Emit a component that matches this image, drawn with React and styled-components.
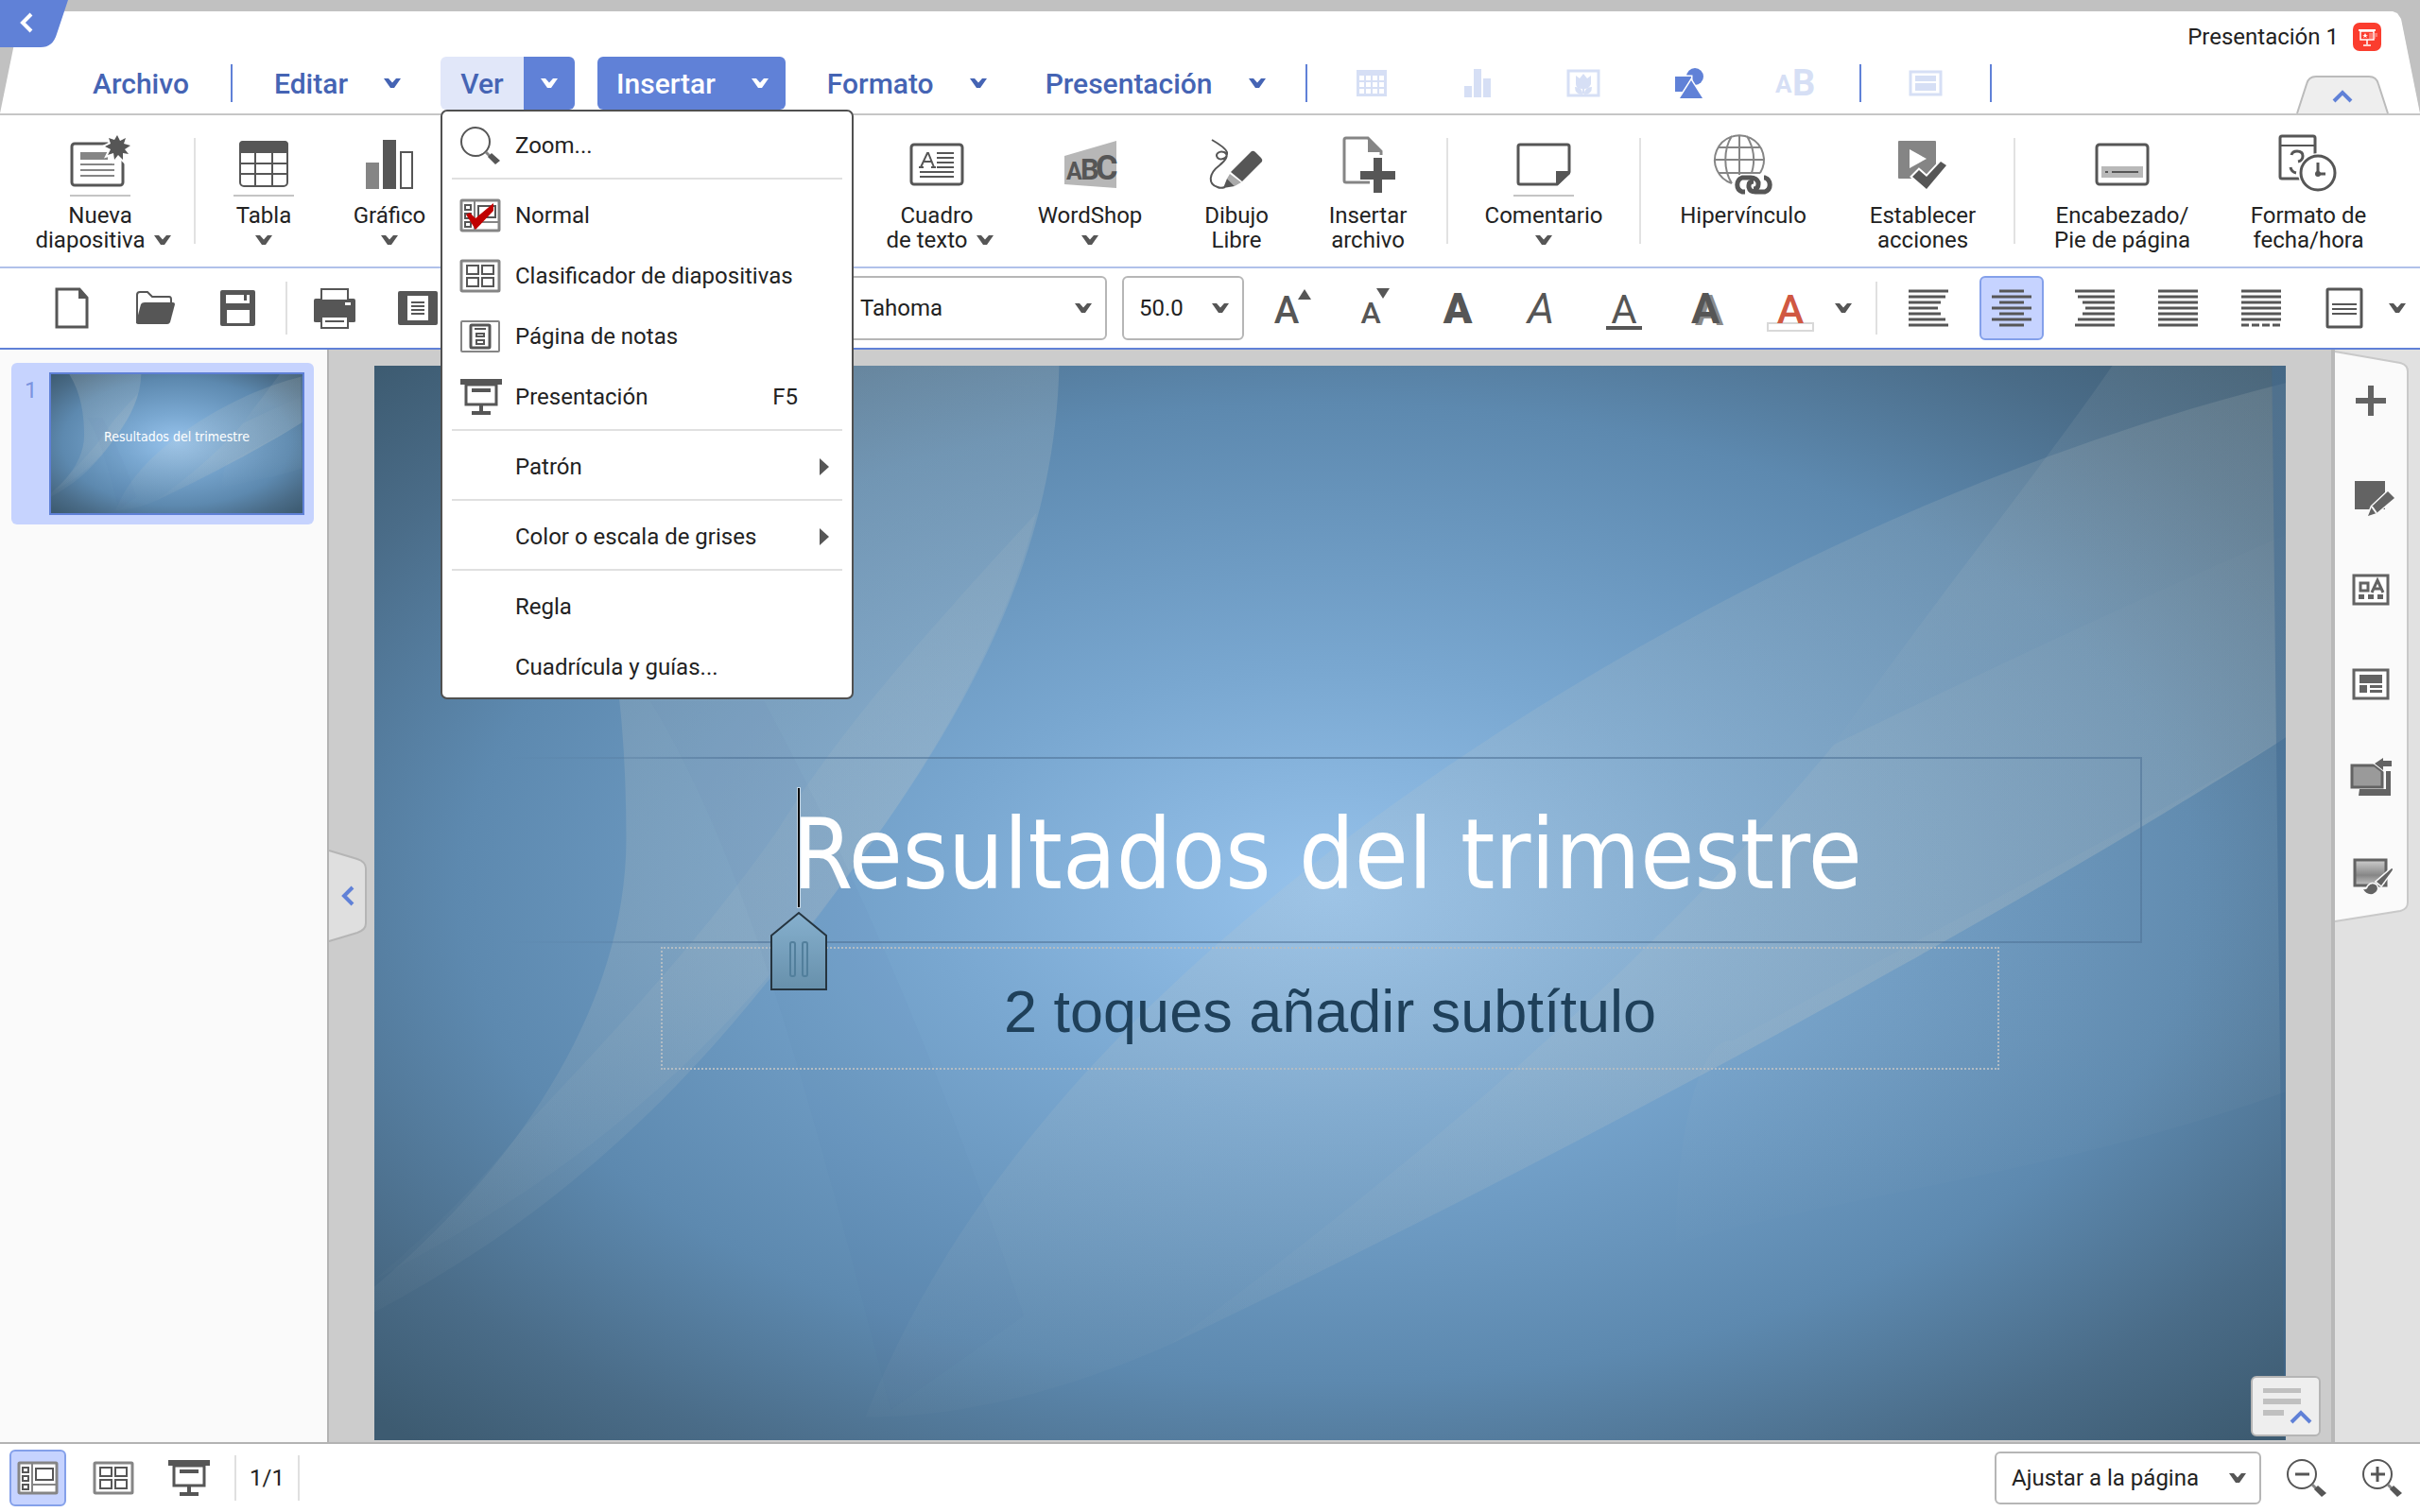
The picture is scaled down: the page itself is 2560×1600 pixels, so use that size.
import React, { useState } from 'react';
import styled, { createGlobalStyle, css } from 'styled-components';

const INK = '#565656';
const MID = '#858585';
const BLUE = '#6081d7';
const PALE = '#d6dff5';

// Global styles
const GlobalStyle = createGlobalStyle`
  * {
    box-sizing: border-box;
  }

  body {
    margin: 0;
    background: #ffffff;
    color: #222222;
    font-family: Roboto, 'Noto Sans', sans-serif;
    font-size: 24px;
  }

  button,
  select {
    margin: 0;
    padding: 0;
    border: 0;
    background: none;
    color: inherit;
    font: inherit;
    cursor: pointer;
  }
`;

const AppContainer = styled.div`
  display: flex;
  flex-direction: column;
  height: 100vh;
  overflow: hidden;
`;

const Svg = styled.svg`
  display: block;
  flex: none;
  overflow: visible;
`;

const Icon = ({ w = 48, h = w, children, ...rest }) => (
  <Svg width={w} height={h} viewBox={`0 0 ${w} ${h}`} fill={INK} aria-hidden="true" {...rest}>
    {children}
  </Svg>
);

const Chevron = ({ color = INK }) => (
  <Icon w={18} h={10} fill={color}>
    <path d="M0 0h5l4 4.500 4-4.500h5l-7 10h-4z" />
  </Icon>
);

// Header
const Header = styled.header`
  position: relative;
  z-index: 2;
  flex: none;
  height: 122px;
  background: #c1c1c1;
  border-bottom: 2px solid #c6c6c6;
`;

const HeaderSheet = styled.div`
  position: absolute;
  inset: 12px 0 0;
  background: #ffffff;
  clip-path: polygon(
    22px 0,
    calc(100% - 29px) 0,
    calc(100% - 24px) 2px,
    calc(100% - 20px) 8px,
    calc(100% - 18px) 18px,
    100% 100%,
    0 100%
  );
`;

const BackButton = styled.button`
  position: absolute;
  top: 0;
  left: 0;
`;

const TitleRow = styled.div`
  position: relative;
  display: flex;
  align-items: center;
  justify-content: flex-end;
  gap: 15px;
  height: 60px;
  padding: 17px 41px 0 0;
`;

const MenuBar = styled.nav`
  position: relative;
  display: flex;
  align-items: center;
  gap: 24px;
  height: 56px;
  padding-left: 78px;
`;

const MenuGroup = styled.div`
  position: relative;
  display: flex;
  min-width: 142px;
  height: 56px;
  border-radius: 6px;
  color: ${(p) => (p.$filled ? '#ffffff' : '#4564b4')};
  background: ${(p) => (p.$filled ? BLUE : 'transparent')};
`;

const MenuLabel = styled.button`
  flex: 1;
  padding: 0 20px;
  font-size: 30px;
  font-weight: 500;
  border-radius: 6px 0 0 6px;
  white-space: nowrap;
  background: ${(p) => (p.$open ? '#e1e7f9' : 'transparent')};
`;

const MenuArrow = styled.button`
  display: grid;
  place-items: center;
  width: 54px;
  border-radius: 0 6px 6px 0;
  background: ${(p) => (p.$open ? BLUE : 'transparent')};
`;

const MenuRule = styled.span`
  width: 2px;
  height: 40px;
  background: ${BLUE};
`;

const QuickButton = styled.button`
  display: grid;
  place-items: center;
  width: 88px;
  height: 56px;
`;

const CollapseButton = styled.button`
  position: absolute;
  right: 33px;
  bottom: 0;
`;

// Drop-down menu below "Ver"
const Dropdown = styled.div`
  position: absolute;
  top: 56px;
  left: 0;
  z-index: 5;
  width: 437px;
  padding: 4px 0 0;
  border: 2px solid #505050;
  border-radius: 7px;
  background: #ffffff;
  color: #222222;
`;

const MenuRow = styled.button`
  display: grid;
  grid-template-columns: 42px 1fr auto 10px;
  align-items: center;
  column-gap: 16px;
  width: 100%;
  height: 64px;
  padding: 0 24px 0 19px;
  text-align: left;
  white-space: nowrap;
`;

const Shortcut = styled.span`
  padding-right: 7px;
`;

const MenuDivider = styled.hr`
  height: 2px;
  margin: 2px 10px 6px;
  border: 0;
  background: #e0e0e0;
`;

// Ribbon
const Ribbon = styled.div`
  display: flex;
  flex: none;
  height: 162px;
  padding: 20px 27px 0 14px;
  border-bottom: 2px solid #b0c1ea;
`;

const RibbonItem = styled.button`
  display: flex;
  flex-direction: column;
  align-items: center;
  flex: none;
  width: ${(p) => p.$width}px;
  height: 130px;
  line-height: 26px;
  white-space: nowrap;
`;

const RibbonIcon = styled.span`
  height: 66px;
  margin-bottom: 7px;
  border-bottom: 2px solid ${(p) => (p.$split ? '#c4c4c4' : 'transparent')};
`;

const RibbonLine = styled.span`
  display: flex;
  align-items: center;
  gap: 9px;
  min-height: 26px;
  padding-left: ${(p) => (p.$withArrow ? 6 : 0)}px;
`;

const RibbonRule = styled.span`
  flex: none;
  width: 2px;
  height: 112px;
  margin: 4px 7px 0;
  background: #e2e2e2;
`;

const Spacer = styled.span`
  flex: 1;
`;

// Format toolbar
const Toolbar = styled.div`
  display: flex;
  align-items: center;
  justify-content: space-between;
  flex: none;
  height: 86px;
  padding: 0 10px 0 42px;
  border-bottom: 2px solid ${BLUE};
`;

const ToolGroup = styled.div`
  display: flex;
  align-items: center;
  gap: ${(p) => p.$gap}px;
`;

const ToolButton = styled.button`
  display: grid;
  place-items: center;
  width: 68px;
  height: 68px;
  border: 2px solid transparent;
  border-radius: 6px;
  ${(p) =>
    p.$active &&
    css`
      border-color: #84a0ea;
      background: #c6d3ff;
    `}
`;

const ArrowButton = styled.button`
  display: grid;
  place-items: center;
  width: 28px;
  height: 68px;
`;

const ToolRule = styled.span`
  width: 2px;
  height: 56px;
  background: #e0e0e0;
`;

const SelectBox = styled.div`
  display: grid;
  align-items: center;
  width: ${(p) => p.$width}px;
  height: ${(p) => p.$height || 68}px;
  border: 2px solid #b6b6b6;
  border-radius: 6px;
  background: #ffffff;

  select,
  svg {
    grid-area: 1 / 1;
  }

  select {
    width: 100%;
    height: 100%;
    padding-left: 16px;
    appearance: none;
    outline: none;
  }

  svg {
    justify-self: end;
    margin-right: 14px;
    pointer-events: none;
  }
`;

// Work area
const Workspace = styled.main`
  display: flex;
  flex: 1;
  min-height: 0;
`;

const SlideList = styled.aside`
  flex: none;
  width: 348px;
  padding: 14px 14px 0 12px;
  border-right: 2px solid #b3b3b3;
  background: #fafafa;
`;

const SlideItem = styled.button`
  display: flex;
  align-items: flex-start;
  width: 320px;
  padding: 10px 10px 10px 14px;
  border-radius: 6px;
  background: #c6d3fe;
`;

const SlideNumber = styled.span`
  width: 26px;
  padding-top: 5px;
  color: #7b94e0;
  text-align: left;
`;

const Thumb = styled.span`
  display: grid;
  width: 270px;
  height: 151px;
  border: 2px solid #5f80d6;

  > * {
    grid-area: 1 / 1;
  }
`;

const ThumbTitle = styled.span`
  position: relative;
  align-self: start;
  justify-self: center;
  padding-top: 57px;
  color: #ffffff;
  font: 14px/18px 'DejaVu Sans Condensed', 'DejaVu Sans', sans-serif;
`;

const Canvas = styled.section`
  position: relative;
  flex: 1;
  padding: 17px 48px 2px;
  background: #cccccc;
`;

const Slide = styled.div`
  position: relative;
  width: 100%;
  height: 100%;
`;

const Backdrop = styled.svg`
  display: block;
  width: 100%;
  height: 100%;
`;

const TitleBox = styled.h1`
  position: absolute;
  top: 36.4%;
  left: 7%;
  right: 7.5%;
  height: 17.3%;
  display: flex;
  align-items: center;
  justify-content: center;
  margin: 0;
  padding: 10px 0 0 6px;
  border: solid #5f86ad;
  border-width: 2px 2px 2px 0;
  border-image: linear-gradient(90deg, transparent, rgba(80, 116, 152, 0.6) 14%) 2;
  color: #ffffff;
  font: 103px/120px 'DejaVu Sans Condensed', 'DejaVu Sans', sans-serif;
  white-space: nowrap;
`;

const SubtitleBox = styled.p`
  position: absolute;
  top: 54.1%;
  left: 15%;
  right: 15%;
  height: 11.4%;
  display: flex;
  align-items: center;
  justify-content: center;
  margin: 0;
  padding-top: 6px;
  border: 2px dotted #b2bcc4;
  color: #1f405a;
  font: 63px/72px 'Liberation Sans', Arial, sans-serif;
  white-space: nowrap;
`;

const Caret = styled.span`
  position: absolute;
  top: 39.2%;
  left: 22.1%;
  width: 4px;
  height: 128px;
  border: 1px solid #c5d6e4;
  background: #000000;
`;

const CaretHandle = styled.span`
  position: absolute;
  top: 50.8%;
  left: 20.7%;
`;

const PanelHandle = styled.button`
  position: absolute;
  top: calc(50% - 49px);
  left: 0;
`;

const NotesButton = styled.button`
  position: absolute;
  right: 11px;
  bottom: 6px;
  width: 74px;
  height: 64px;
  padding: 0 0 0 11px;
  border: 2px solid #b5b5b5;
  border-radius: 6px;
  background: #eeeeee;
`;

const SidePanel = styled.aside`
  flex: none;
  width: 94px;
  border-left: 4px solid #b8b8b8;
  background: #e1e1e1;
`;

const SideTab = styled.div`
  display: grid;
  width: 78px;
  height: 606px;

  > * {
    grid-area: 1 / 1;
  }
`;

const SideButtons = styled.div`
  position: relative;
  display: flex;
  flex-direction: column;
  padding-top: 4px;
`;

const SideButton = styled.button`
  display: grid;
  place-items: center;
  width: 76px;
  height: 100px;
`;

// Status bar
const StatusBar = styled.footer`
  display: flex;
  align-items: center;
  flex: none;
  height: 74px;
  padding: 0 12px 0 10px;
  border-top: 2px solid #b3b3b3;
`;

const ViewButton = styled(ToolButton)`
  width: 60px;
  height: 60px;
  margin-right: 20px;
`;

const PageCount = styled.span`
  padding: 8px 14px;
  border: solid #e0e0e0;
  border-width: 0 2px;
  line-height: 32px;
  margin-left: -2px;
`;

const ZoomButtons = styled.div`
  display: flex;
  gap: 24px;
  margin-left: 20px;
`;

const ZoomButton = styled.button`
  display: grid;
  place-items: center;
  width: 56px;
  height: 60px;
`;

/* ---------- icons ---------- */

const NewSlideIcon = () => (
  <Icon w={64}>
    <rect x="2" y="10" width="54" height="44" rx="3" fill="none" stroke={INK} strokeWidth="3" />
    <path d="M11 19h29v8H11z" fill={MID} />
    <path d="M11 32h36M11 38h36M11 44h36" stroke={MID} strokeWidth="2" />
    <path
      d="M50 1l3 6 6-3-2 6 7 2-6 4 4 5-6-1 0 7-5-5-4 5-1-7-6 2 3-6-6-3 6-3-2-6 6 2z"
      stroke="#fff"
      strokeWidth="4"
      paintOrder="stroke"
    />
  </Icon>
);

const TableIcon = () => (
  <Icon w={64}>
    <path d="M6 20v-9a4 4 0 0 1 4-4h44a4 4 0 0 1 4 4v9z" />
    <rect x="7" y="8" width="50" height="47" rx="4" fill="none" stroke={INK} strokeWidth="2" />
    <path d="M7 31h50M7 42h50M23 20v35M41 20v35" stroke={INK} strokeWidth="2" />
  </Icon>
);

const ChartIcon = () => (
  <Icon w={64}>
    <path d="M7 30h14v28H7z" fill={MID} />
    <path d="M25 6h14v52H25z" />
    <path d="M44 19h12v38H44z" fill="none" stroke={INK} strokeWidth="2" />
  </Icon>
);

const TextBoxIcon = () => (
  <Icon w={64}>
    <rect x="5" y="11" width="54" height="42" rx="3" fill="none" stroke={INK} strokeWidth="3" />
    <path d="M15 35l7-15h1l6 15M18 29h9M13 35h5M26 35h5" fill="none" stroke={INK} strokeWidth="2" />
    <path d="M32 20h18M32 25h18M32 30h18M32 35h18M14 40h36M14 45h36" stroke={INK} strokeWidth="2" />
  </Icon>
);

const WordShopIcon = () => (
  <Icon w={64} fontFamily="'Liberation Sans Narrow', Roboto, sans-serif" fontWeight="700">
    <path d="M5 23L60 7v50L5 53z" fill="#b7b7b7" />
    <text x="7" y="48" fontSize="25">A</text>
    <text x="22" y="48" fontSize="31">B</text>
    <text x="38" y="48" fontSize="36">C</text>
  </Icon>
);

const DrawIcon = () => (
  <Icon w={64}>
    <path
      d="M6 6c7 4 14 8 16 13 1 7-7 9-10 6-3-4 2-8 7-6 6 3 1 9-5 14-12 9-12 20-2 23 2 1 5 1 8 0"
      fill="none"
      stroke={INK}
      strokeWidth="2"
    />
    <path d="M48 18q2-1 4 1l6 6q2 2 1 4L38 50 26 40z" />
    <path d="M25 42l12 9-7 4-8-8z" fill="#aaa" />
    <path d="M22 47l8 8-12 2z" />
  </Icon>
);

const InsertFileIcon = () => (
  <Icon w={64}>
    <path d="M34 51H9a2 2 0 0 1-2-2V6a2 2 0 0 1 2-2h23l14 14v4" fill="none" stroke={MID} strokeWidth="3" />
    <path d="M32 4l15 15H32z" fill={MID} />
    <path d="M38 25h9v14h14v9H47v14h-9V48H24v-9h14z" />
  </Icon>
);

const CommentIcon = () => (
  <Icon w={64}>
    <path
      d="M7 11h50a2 2 0 0 1 2 2v27L46 53H7a2 2 0 0 1-2-2V13a2 2 0 0 1 2-2z"
      fill="none"
      stroke={INK}
      strokeWidth="3"
    />
    <path d="M45 39h15v3L47 54h-2z" />
  </Icon>
);

const LinkIcon = () => (
  <Icon w={64}>
    <g fill="none" stroke={MID} strokeWidth="2">
      <path d="M20 52A26 26 0 1 1 50 41M28 1v42M2 27h52M6 14h44M6 41h44M20 2c-9 14-9 36 0 50M36 2c7 12 9 26 5 39" />
    </g>
    <g fill="none" stroke={INK} strokeWidth="5">
      <path d="M34 61h-3a8 8 0 0 1 0-15h9q6 0 8 5v2q0 5-5 5" />
      <path d="M54 46h1a8 8 0 0 1 0 15H45q-6 0-7-5v-2q0-4 5-4" />
    </g>
  </Icon>
);

const ActionIcon = () => (
  <Icon w={64}>
    <rect x="6" y="7" width="40" height="40" rx="1" fill={MID} />
    <path d="M18 16l18 10-18 10z" fill="#fff" />
    <path d="M21 45l7-7 8 7 15-16 6 4-21 25z" stroke="#fff" strokeWidth="4" paintOrder="stroke" />
  </Icon>
);

const FooterIcon = () => (
  <Icon w={64}>
    <rect x="5" y="11" width="54" height="42" rx="3" fill="none" stroke={INK} strokeWidth="3" />
    <path d="M10 34h44v12H10z" fill="#b9b9b9" />
    <path d="M14 40h3M21 40h28" stroke={INK} strokeWidth="2" />
  </Icon>
);

const DateIcon = () => (
  <Icon w={64}>
    <rect x="2" y="2" width="37" height="45" rx="2" fill="none" stroke={INK} strokeWidth="3" />
    <path d="M2 12h37" stroke={INK} strokeWidth="2" />
    <path d="M14 22q1-4 6-4 6 0 6 5t-5 6M13 35q1 5 6 6" fill="none" stroke={INK} strokeWidth="3" />
    <circle cx="42" cy="41" r="21" fill="#fff" />
    <circle cx="42" cy="41" r="18" fill="none" stroke={INK} strokeWidth="3" />
    <path d="M42 30v12h8" fill="none" stroke={INK} strokeWidth="3" />
    <circle cx="42" cy="42" r="3" />
  </Icon>
);

const NewDocIcon = () => (
  <Icon>
    <path d="M8 4h24l8 9v31H8z" fill="none" stroke={INK} strokeWidth="3" />
    <path d="M31 3l10 11H31z" />
  </Icon>
);

const FolderIcon = () => (
  <Icon>
    <path d="M5 40V10q0-3 3-3h8l5 5h18q2 0 2 3v4" fill="none" stroke={INK} strokeWidth="2" />
    <path d="M13 18h30q2 0 2 2l-5 19q-1 2-3 2H6q-2 0-2-2l5-19q1-2 4-2z" />
  </Icon>
);

const SaveIcon = () => (
  <Icon>
    <path d="M7 5h33q2 0 2 2v34q0 2-2 2H7q-2 0-2-2V7q0-2 2-2z" />
    <path d="M11 10h25v9H11zM12 26h24v14H12z" fill="#fff" />
    <path d="M30 10h3v6h-3z" />
  </Icon>
);

const PrintIcon = () => (
  <Icon>
    <path d="M2 16q0-2 2-2h40q2 0 2 2v22q0 1-2 1H4q-2 0-2-1z" />
    <path d="M10 15V4h28v11" fill="#fff" stroke={INK} strokeWidth="2" />
    <path d="M35 18h6v3h-6z" fill="#fff" />
    <path d="M10 33h28v12H10z" fill="#fff" stroke={INK} strokeWidth="2" />
    <path d="M14 38h20" stroke={INK} strokeWidth="2" />
  </Icon>
);

const PreviewIcon = () => (
  <Icon>
    <rect x="3" y="6" width="42" height="36" rx="2" />
    <path d="M13 11h22v26H13z" fill="#fff" />
    <path d="M17 18h14M17 22h14M17 26h14M17 30h14" stroke={INK} strokeWidth="2" />
  </Icon>
);

const LetterIcon = ({ size, weight, slant, fill = INK, x = 24, children }) => (
  <Icon fontFamily="Roboto, sans-serif" textAnchor="middle">
    {children}
    <text x={x} y="40" fontSize={size} fontWeight={weight} fontStyle={slant} fill={fill}>
      A
    </text>
  </Icon>
);

const alignments = {
  left: [[3, 45], [3, 42], [3, 37], [3, 34], [3, 37], [3, 42], [3, 45]],
  center: [[11, 37], [3, 45], [11, 37], [3, 45], [11, 37], [3, 45], [11, 37]],
  right: [[3, 45], [6, 45], [11, 45], [14, 45], [11, 45], [6, 45], [3, 45]],
  justify: Array(7).fill([3, 45]),
  spread: Array(6).fill([3, 45]),
};

const AlignIcon = ({ kind }) => (
  <Icon stroke={INK} strokeWidth="3">
    {alignments[kind].map(([a, b], i) => (
      <path key={i} d={`M${a} ${6 + i * 6}H${b}`} />
    ))}
    {kind === 'spread' && <path d="M3 42h42" strokeDasharray="8 3" />}
  </Icon>
);

const AnchorIcon = () => (
  <Icon>
    <rect x="6" y="4" width="36" height="40" rx="1" fill="none" stroke={INK} strokeWidth="3" />
    <path d="M11 20h26M11 25h26M11 30h26" stroke={INK} strokeWidth="2" />
  </Icon>
);

const NormalViewIcon = ({ checked }) => (
  <Icon w={42} h={36}>
    <rect x="1" y="2" width="40" height="32" rx="1" fill="#fff" stroke={MID} strokeWidth="3" />
    <path d="M15 3v30M15 25h26" stroke={MID} strokeWidth="2" />
    <g fill="#fff" stroke={INK} strokeWidth="2">
      <path d="M5 7h6v5H5zM5 16h6v5H5zM5 25h6v5H5zM19 8h18v12H19z" />
    </g>
    {checked && <path d="M6 17l4-2 6 6L35 5v8L16 33z" fill="#c00000" />}
  </Icon>
);

const SorterIcon = () => (
  <Icon w={42} h={36}>
    <rect x="1" y="2" width="40" height="32" rx="1" fill="#fff" stroke={MID} strokeWidth="3" />
    <path
      d="M7 7h12v9H7zM23 7h12v9H23zM7 20h12v9H7zM23 20h12v9H23z"
      fill="none"
      stroke={INK}
      strokeWidth="2"
    />
  </Icon>
);

const NotesPageIcon = () => (
  <Icon w={42} h={36}>
    <rect x="1" y="2" width="40" height="32" rx="1" fill="#fff" stroke={MID} strokeWidth="2" />
    <rect x="11" y="6" width="20" height="24" rx="1" fill="none" stroke={INK} strokeWidth="3" />
    <path d="M15 10h12M17 15h8v3h-8zM17 22h8v4h-8z" fill="none" stroke={INK} strokeWidth="2" />
  </Icon>
);

const ShowIcon = () => (
  <Icon w={44} h={38}>
    <path d="M0 0h44v6H0z" />
    <path d="M6 6h32v21H6z" fill="none" stroke={INK} strokeWidth="3" />
    <path d="M12 10h20v4H12zM20 28h4v7h-4zM12 34h20v4H12z" />
  </Icon>
);

const MagnifierIcon = ({ sign }) => (
  <Icon w={42} h={42}>
    <circle cx="16" cy="17" r="15" fill="none" stroke={INK} strokeWidth="2" />
    <path d="M27 28l5 5" stroke={MID} strokeWidth="3" />
    <path d="M29 33l4-4 9 8-5 4z" />
    {sign && <path d="M9 17h15" stroke={INK} strokeWidth="3" />}
    {sign === 'plus' && <path d="M16 9v16" stroke={INK} strokeWidth="3" />}
  </Icon>
);

const PresentationBadge = () => (
  <Icon w={30} fill="#fff">
    <rect width="30" height="30" rx="7" fill="#fb3d2e" />
    <path d="M6 7h18v2H6z" />
    <path d="M8 9h14v9H8zM15 18v5M11 24h8" fill="none" stroke="#fff" strokeWidth="1.500" />
    <path d="M13 11l1 2h2l-2 1 1 2-2-1-2 1 1-2-2-1h2z" />
    <path d="M17 12h9M17 14h9M17 16h7" stroke="#ffb6ae" />
  </Icon>
);

/* ---------- quick insert icons in the menu bar ---------- */

const QuickTable = () => (
  <Icon w={32} h={28} fill={PALE}>
    <path d="M0 0h32v28H0z" />
    {[6, 13, 20].map((y) =>
      [3, 10, 17, 24].map((x) => <rect key={`${x}-${y}`} x={x} y={y} width="5" height="5" fill="#fff" />)
    )}
  </Icon>
);

const QuickChart = () => (
  <Icon w={28} h={30} fill={PALE}>
    <path d="M0 18h8v12H0zM10 0h8v30h-8zM20 10h8v20h-8z" />
  </Icon>
);

const QuickPicture = () => (
  <Icon w={34} h={28} fill={PALE}>
    <path d="M1 1h32v26H1z" fill="none" stroke={PALE} strokeWidth="3" />
    <path d="M9 6l4 3 4-5 4 5 4-3v9q-2 5-7 5v5h-2v-5q-7 0-7-5z" />
    <path d="M8 18q8 0 8 8-8 0-8-8zM26 18q-8 0-8 8 8 0 8-8z" />
  </Icon>
);

const QuickShapes = () => (
  <Icon w={30} h={32} fill={BLUE}>
    <circle cx="21" cy="9" r="9" />
    <path d="M0 9h17v16H0z" stroke="#fff" strokeWidth="3" paintOrder="stroke" />
    <path d="M17 13l12 19H5z" stroke="#fff" strokeWidth="3" paintOrder="stroke" />
  </Icon>
);

const QuickWordArt = () => (
  <Icon w={42} h={32} fill={PALE} fontFamily="Roboto, sans-serif" fontWeight="700">
    <text x="0" y="26" fontSize="26">A</text>
    <text x="18" y="29" fontSize="38">B</text>
  </Icon>
);

const QuickSlide = () => (
  <Icon w={34} h={28} fill={PALE}>
    <path d="M1 2h32v24H1z" fill="none" stroke={PALE} strokeWidth="3" />
    <path d="M6 6h22v6H6zM6 14h22v8H6z" />
  </Icon>
);

/* ---------- side panel icons ---------- */

const SIDE = '#636363';

const PlusIcon = () => (
  <Icon w={42} h={40} fill={SIDE}>
    <path d="M18 4h6v13h13v6H24v13h-6V23H5v-6h13z" />
  </Icon>
);

const EditPageIcon = () => (
  <Icon w={42} h={40} fill={SIDE}>
    <path d="M4 5h32v30H4z" />
    <path d="M39 16l7 7-19 16-9 3 4-10z" stroke="#fafafa" strokeWidth="3" paintOrder="stroke" />
    <path d="M22 32l5 7" stroke="#fafafa" strokeWidth="2" />
  </Icon>
);

const DesignIcon = () => (
  <Icon w={38} h={34} fill={SIDE}>
    <path d="M1 2h36v30H1z" fill="#fff" stroke={SIDE} strokeWidth="3" />
    <path d="M8 10h8v8H8z" fill="none" stroke={SIDE} strokeWidth="3" />
    <path d="M20 20l6-13 6 13M22 16h8" fill="none" stroke={SIDE} strokeWidth="3" />
    <path d="M6 22h6v5H6zM16 22h6v5h-6zM26 22h6v5h-6z" />
  </Icon>
);

const LayoutIcon = () => (
  <Icon w={38} h={34} fill={SIDE}>
    <path d="M1 2h36v30H1z" fill="#fff" stroke={SIDE} strokeWidth="3" />
    <path d="M7 7h24v9H7zM7 18h8v8H7zM18 18h13v3H18zM18 23h13v3H18z" />
  </Icon>
);

const TransitionIcon = () => (
  <Icon w={44} h={44} fill={SIDE}>
    <path d="M10 33h28V14h5v26H9z" />
    <path d="M2 8h24l8 6v17H2z" fill="#9a9a9a" stroke={SIDE} strokeWidth="3" />
    <path d="M26 6l9-6v3h9v6h-9v4z" stroke="#fafafa" strokeWidth="2" paintOrder="stroke" />
  </Icon>
);

const BackgroundIcon = () => (
  <Icon w={42} h={40} fill={SIDE}>
    <defs>
      <linearGradient id="sheet" x2="0" y2="1">
        <stop stopColor="#cfcfcf" />
        <stop offset="0.6" stopColor="#868686" />
        <stop offset="1" stopColor="#c4c4c4" />
      </linearGradient>
    </defs>
    <path d="M4 6h33v27H4z" fill="url(#sheet)" stroke={SIDE} strokeWidth="3" />
    <g stroke="#fafafa" strokeWidth="3" paintOrder="stroke">
      <path d="M43 15q2 0 0 3L32 33l-5-4z" />
      <path d="M13 37q4 1 5-3 4-5 9-1 3 6-4 9-7 1-10-5z" />
    </g>
  </Icon>
);

// Slide artwork, shared by the canvas and the thumbnail
const SlideArt = ({ id }) => (
  <Backdrop viewBox="12 36 1510 1486" preserveAspectRatio="none" aria-hidden="true">
    <defs>
      <radialGradient id={id} cx="0.5" cy="0.49" r="0.7">
        <stop offset="0" stopColor="#97c3ec" />
        <stop offset="0.3" stopColor="#79a7d0" />
        <stop offset="0.65" stopColor="#5d89af" />
        <stop offset="0.85" stopColor="#4a6c88" />
        <stop offset="1" stopColor="#3d5b71" />
      </radialGradient>
      <linearGradient id={`${id}-fade`} x2="0" y2="1">
        <stop stopColor="#c3c9c6" stopOpacity="0.2" />
        <stop offset="0.6" stopColor="#c3c9c6" stopOpacity="0.2" />
        <stop offset="1" stopColor="#c3c9c6" stopOpacity="0.03" />
      </linearGradient>
    </defs>
    <rect x="12" y="36" width="1510" height="1486" fill={`url(#${id})`} />
    <g fill={`url(#${id}-fade)`}>
      <path d="M122 36C195 250 211 480 211 690C211 900 140 1120 12 1310V1345C200 1170 300 950 395 720C500 470 550 260 553 36z" />
      <path
        d="M535 240C440 420 380 540 330 680C270 830 200 960 130 1090C90 1180 40 1260 12 1300C200 1130 300 950 395 720C470 540 515 380 535 240z"
        opacity="0.5"
      />
      <path d="M400 1490C470 1180 600 930 780 690C1000 400 1270 170 1522 60V550C1300 800 940 1140 640 1390C550 1460 470 1490 400 1490z" opacity="0.8" />
      <path d="M1385 36C1320 200 1240 370 1165 560C1330 420 1430 340 1522 270V36z" opacity="0.5" />
      <path
        d="M1522 270C1430 340 1330 420 1165 560C1090 720 930 1020 640 1390C940 1140 1300 800 1522 550z"
        opacity="0.6"
      />
      <path d="M1522 1040C1350 1150 1180 1180 1040 1250C1040 1100 1060 960 1085 970C1260 800 1400 680 1522 550z" opacity="0.25" />
    </g>
    <path d="M320 500C400 760 470 1060 525 1350L420 1480C350 1000 300 700 230 500z" fill="#3f6a96" opacity="0.03" />
    <path d="M1511 36h11v1486h-1z" fill="#3f6a91" opacity="0.5" />
  </Backdrop>
);

/* ---------- page ---------- */

const viewMenu = [
  { label: 'Zoom...', icon: <MagnifierIcon /> },
  null,
  { label: 'Normal', icon: <NormalViewIcon checked /> },
  { label: 'Clasificador de diapositivas', icon: <SorterIcon /> },
  { label: 'Página de notas', icon: <NotesPageIcon /> },
  { label: 'Presentación', icon: <ShowIcon />, shortcut: 'F5' },
  null,
  { label: 'Patrón', submenu: true },
  null,
  { label: 'Color o escala de grises', submenu: true },
  null,
  { label: 'Regla' },
  { label: 'Cuadrícula y guías...' },
];

const menus = ['Editar', 'Ver', 'Insertar', 'Formato', 'Presentación'];

const ribbonLeft = [
  { lines: ['Nueva', 'diapositiva'], icon: <NewSlideIcon />, width: 184, split: true, arrow: true },
  null,
  { lines: ['Tabla'], icon: <TableIcon />, width: 130, split: true, arrow: true },
  { lines: ['Gráfico'], icon: <ChartIcon />, width: 136, arrow: true },
];

const ribbonRight = [
  { lines: ['Cuadro', 'de texto'], icon: <TextBoxIcon />, width: 140, arrow: true },
  { lines: ['WordShop'], icon: <WordShopIcon />, width: 184, arrow: true },
  { lines: ['Dibujo', 'Libre'], icon: <DrawIcon />, width: 126 },
  { lines: ['Insertar', 'archivo'], icon: <InsertFileIcon />, width: 152 },
  null,
  { lines: ['Comentario'], icon: <CommentIcon />, width: 188, split: true, arrow: true },
  null,
  { lines: ['Hipervínculo'], icon: <LinkIcon />, width: 202 },
  { lines: ['Establecer', 'acciones'], icon: <ActionIcon />, width: 178 },
  null,
  { lines: ['Encabezado/', 'Pie de página'], icon: <FooterIcon />, width: 212 },
  { lines: ['Formato de', 'fecha/hora'], icon: <DateIcon />, width: 182 },
];

const RibbonItems = ({ items }) =>
  items.map((item, i) =>
    item ? (
      <RibbonItem key={i} $width={item.width}>
        <RibbonIcon $split={item.split}>{item.icon}</RibbonIcon>
        <RibbonLine>{item.lines[0]}</RibbonLine>
        <RibbonLine $withArrow={item.arrow && item.lines.length > 1}>
          {item.lines[1]}
          {item.arrow && <Chevron />}
        </RibbonLine>
      </RibbonItem>
    ) : (
      <RibbonRule key={i} />
    )
  );

const ViewMenu = () => (
  <Dropdown role="menu">
    {viewMenu.map((item, i) =>
      item ? (
        <MenuRow key={i} role="menuitem">
          <span>{item.icon}</span>
          <span>{item.label}</span>
          <Shortcut>{item.shortcut}</Shortcut>
          {item.submenu && (
            <Icon w={10} h={18}>
              <path d="M0 0l10 9-10 9z" />
            </Icon>
          )}
        </MenuRow>
      ) : (
        <MenuDivider key={i} />
      )
    )}
  </Dropdown>
);

const App = () => {
  const [open, setOpen] = useState('Ver');
  const [align, setAlign] = useState('center');

  return (
    <AppContainer>
      <GlobalStyle />
      <Header>
        <HeaderSheet />
        <TitleRow>
          <span>Presentación 1</span>
          <PresentationBadge />
        </TitleRow>
        <MenuBar>
          <MenuGroup>
            <MenuLabel>Archivo</MenuLabel>
          </MenuGroup>
          <MenuRule />
          {menus.map((name) => {
            const isOpen = open === name;
            const filled = name === 'Insertar';
            return (
              <MenuGroup key={name} $filled={filled}>
                <MenuLabel $open={isOpen}>{name}</MenuLabel>
                <MenuArrow
                  $open={isOpen}
                  aria-label={`Menú ${name}`}
                  onClick={() => setOpen(isOpen ? null : name)}
                >
                  <Chevron color={isOpen || filled ? '#fff' : '#4564b4'} />
                </MenuArrow>
                {isOpen && name === 'Ver' && <ViewMenu />}
              </MenuGroup>
            );
          })}
          <MenuRule />
          <QuickButton aria-label="Tabla"><QuickTable /></QuickButton>
          <QuickButton aria-label="Gráfico"><QuickChart /></QuickButton>
          <QuickButton aria-label="Imagen"><QuickPicture /></QuickButton>
          <QuickButton aria-label="Formas"><QuickShapes /></QuickButton>
          <QuickButton aria-label="WordShop"><QuickWordArt /></QuickButton>
          <MenuRule />
          <QuickButton aria-label="Diapositiva"><QuickSlide /></QuickButton>
          <MenuRule />
        </MenuBar>
        <BackButton aria-label="Atrás">
          <Icon w={72} h={50}>
            <path d="M0 0h72L60 36q-4 14-17 14H0z" fill={BLUE} />
            <path d="M33 15l-9 9 9 9" fill="none" stroke="#fff" strokeWidth="4" />
          </Icon>
        </BackButton>
        <CollapseButton aria-label="Contraer">
          <Icon w={98} h={40}>
            <path d="M1 40L11 9q2-8 10-8h56q8 0 10 8l10 31" fill="#eeeeee" stroke="#bbbbbb" strokeWidth="2" />
            <path d="M40 27l9-9 9 9" fill="none" stroke={BLUE} strokeWidth="4" />
          </Icon>
        </CollapseButton>
      </Header>

      <Ribbon>
        <RibbonItems items={ribbonLeft} />
        <Spacer />
        <RibbonItems items={ribbonRight} />
      </Ribbon>

      <Toolbar>
        <ToolGroup $gap={16}>
          <ToolGroup $gap={20}>
            <ToolButton aria-label="Nuevo"><NewDocIcon /></ToolButton>
            <ToolButton aria-label="Abrir"><FolderIcon /></ToolButton>
            <ToolButton aria-label="Guardar"><SaveIcon /></ToolButton>
          </ToolGroup>
          <ToolRule />
          <ToolGroup $gap={20}>
            <ToolButton aria-label="Imprimir"><PrintIcon /></ToolButton>
            <ToolButton aria-label="Vista previa"><PreviewIcon /></ToolButton>
          </ToolGroup>
        </ToolGroup>
        <ToolGroup $gap={16}>
          <SelectBox $width={279}>
            <select aria-label="Fuente" defaultValue="Tahoma">
              <option>Tahoma</option>
            </select>
            <Chevron />
          </SelectBox>
          <SelectBox $width={129}>
            <select aria-label="Tamaño" defaultValue="50.0">
              <option>50.0</option>
            </select>
            <Chevron />
          </SelectBox>
          <ToolGroup $gap={20}>
            <ToolButton aria-label="Aumentar tamaño">
              <LetterIcon size={40} weight={500} x={19}><path d="M31 15l7-11 7 11z" /></LetterIcon>
            </ToolButton>
            <ToolButton aria-label="Reducir tamaño">
              <LetterIcon size={32} weight={500} x={20}><path d="M26 3h14l-7 11z" /></LetterIcon>
            </ToolButton>
            <ToolButton aria-label="Negrita"><LetterIcon size={45} weight={900} /></ToolButton>
            <ToolButton aria-label="Cursiva"><LetterIcon size={45} weight={400} slant="italic" /></ToolButton>
            <ToolButton aria-label="Subrayado">
              <LetterIcon size={42} weight={400}><path d="M5 43h38v4H5z" /></LetterIcon>
            </ToolButton>
            <ToolButton aria-label="Sombra">
              <LetterIcon size={45} weight={700} x={22}>
                <text x="26" y="42" fontSize="45" fontWeight="700" fill="#8b8b8b">A</text>
              </LetterIcon>
            </ToolButton>
            <ToolGroup $gap={8}>
              <ToolButton aria-label="Color de fuente">
                <LetterIcon size={43} weight={500} fill="#d05842">
                  <path d="M0 40h48v8H0z" fill="#fff" stroke="#d8d8d8" strokeWidth="2" />
                </LetterIcon>
              </ToolButton>
              <ArrowButton aria-label="Más colores"><Chevron /></ArrowButton>
            </ToolGroup>
            <ToolRule />
            {Object.keys(alignments).map((kind) => (
              <ToolButton key={kind} aria-label={kind} $active={align === kind} onClick={() => setAlign(kind)}>
                <AlignIcon kind={kind} />
              </ToolButton>
            ))}
            <ToolGroup $gap={8}>
              <ToolButton aria-label="Alineación vertical"><AnchorIcon /></ToolButton>
              <ArrowButton aria-label="Más alineaciones"><Chevron /></ArrowButton>
            </ToolGroup>
          </ToolGroup>
        </ToolGroup>
      </Toolbar>

      <Workspace>
        <SlideList>
          <SlideItem>
            <SlideNumber>1</SlideNumber>
            <Thumb>
              <SlideArt id="thumb" />
              <ThumbTitle>Resultados del trimestre</ThumbTitle>
            </Thumb>
          </SlideItem>
        </SlideList>

        <Canvas>
          <Slide>
            <SlideArt id="slide" />
            <TitleBox>Resultados del trimestre</TitleBox>
            <SubtitleBox>2 toques añadir subtítulo</SubtitleBox>
            <Caret />
            <CaretHandle>
              <Icon w={60} h={84}>
                <defs>
                  <linearGradient id="handle" x2="0" y2="1">
                    <stop stopColor="#86b0ce" />
                    <stop offset="1" stopColor="#6790ab" />
                  </linearGradient>
                </defs>
                <path d="M1 25L30 1l29 24v57H1z" fill="url(#handle)" stroke="#25343f" strokeWidth="2" />
                <g fill="none" stroke="#527f9c" strokeWidth="2">
                  <rect x="21" y="32" width="5" height="36" rx="2" />
                  <rect x="34" y="32" width="5" height="36" rx="2" />
                </g>
              </Icon>
            </CaretHandle>
          </Slide>
          <PanelHandle aria-label="Ocultar diapositivas">
            <Icon w={40} h={98}>
              <path d="M0 1l30 9q9 3 9 10v58q0 7-9 10l-30 9" fill="#dfdfdf" stroke="#b5b5b5" strokeWidth="2" />
              <path d="M25 40l-9 9 9 9" fill="none" stroke={BLUE} strokeWidth="4" />
            </Icon>
          </PanelHandle>
          <NotesButton aria-label="Notas">
            <Icon w={50} h={38}>
              <path d="M0 0h40v5H0zM0 11h40v6H0zM0 23h22v6H0z" fill="#c0c0c0" />
              <path d="M30 36l10-10 10 10" fill="none" stroke={BLUE} strokeWidth="4" />
            </Icon>
          </NotesButton>
        </Canvas>

        <SidePanel>
          <SideTab>
            <Icon w={78} h={606}>
              <path d="M0 2l69 12q8 2 8 9v562q0 7-8 9L0 605" fill="#fafafa" stroke="#c9c9c9" strokeWidth="2" />
            </Icon>
            <SideButtons>
              <SideButton aria-label="Añadir"><PlusIcon /></SideButton>
              <SideButton aria-label="Editar página"><EditPageIcon /></SideButton>
              <SideButton aria-label="Diseño"><DesignIcon /></SideButton>
              <SideButton aria-label="Composición"><LayoutIcon /></SideButton>
              <SideButton aria-label="Transición"><TransitionIcon /></SideButton>
              <SideButton aria-label="Fondo"><BackgroundIcon /></SideButton>
            </SideButtons>
          </SideTab>
        </SidePanel>
      </Workspace>

      <StatusBar>
        <ViewButton $active aria-label="Vista normal"><NormalViewIcon /></ViewButton>
        <ViewButton aria-label="Clasificador"><SorterIcon /></ViewButton>
        <ViewButton aria-label="Iniciar presentación"><ShowIcon /></ViewButton>
        <PageCount>1/1</PageCount>
        <Spacer />
        <SelectBox $width={282} $height={56}>
          <select aria-label="Zoom" defaultValue="Ajustar a la página">
            <option>Ajustar a la página</option>
          </select>
          <Chevron />
        </SelectBox>
        <ZoomButtons>
          <ZoomButton aria-label="Reducir"><MagnifierIcon sign="minus" /></ZoomButton>
          <ZoomButton aria-label="Ampliar"><MagnifierIcon sign="plus" /></ZoomButton>
        </ZoomButtons>
      </StatusBar>
    </AppContainer>
  );
};

export default App;
